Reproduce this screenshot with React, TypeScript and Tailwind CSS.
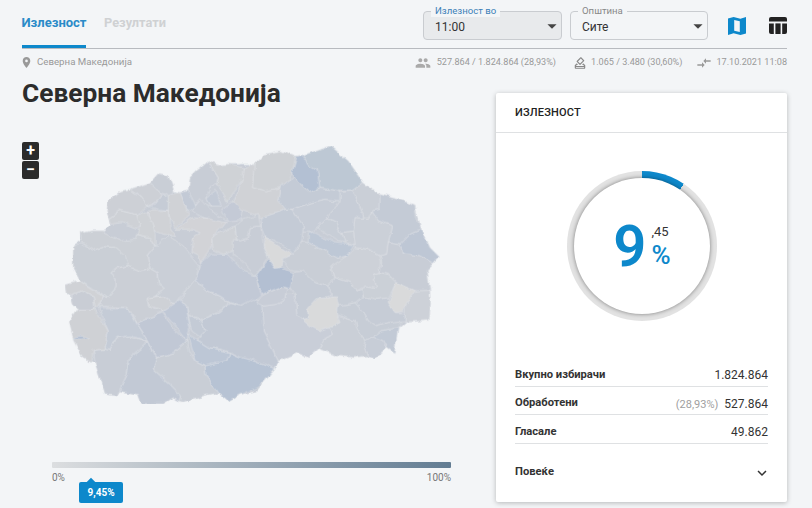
import React from 'react';
import { MdPlace, MdPeople, MdOutlineHowToVote, MdCompareArrows, MdExpandMore, MdArrowDropDown } from 'react-icons/md';

type Region = [string, string];

const outlineLeft =
  '630,100 565,100 535,103 505,92 470,120 450,140 445,180 420,185 400,180 385,135 355,128 330,155 270,175 240,182 205,210 200,240 210,280 195,300 155,300 135,305 120,298 120,330 100,345 100,410 120,450 75,462 78,485 95,500 100,520 115,535 88,575 100,620 130,680 155,695 165,695 195,790 230,795 240,780 295,790 305,818 370,818 400,800 430,812 520,790 535,785 565,810 600,790 630,780';
const outlineRight =
  '0,790 50,780 105,715 115,690 175,665 205,680 240,650 290,675 385,675 405,682 440,650 465,668 478,590 495,575 565,568 572,515 565,480 562,415 598,378 570,350 545,298 525,225 490,210 420,190 370,155 325,90 272,45 190,75 165,78 120,60 75,70 45,100 0,100';

const leftRegions: Region[] = [
  ['330,155 355,128 385,135 403,180 385,195 365,190', '#c9ced6'],
  ['270,175 330,155 365,190 355,210 320,225 300,195', '#cdd0d6'],
  ['205,210 240,182 270,175 300,195 320,225 295,252 240,238 207,262 200,240', '#cdd0d6'],
  ['207,262 240,238 295,252 300,280 290,292 245,275 210,280', '#ced1d6'],
  ['120,298 135,305 155,300 195,300 190,305 240,330 285,325 290,310 330,320 345,345 325,370 330,412 300,420 265,405 250,375 225,350 190,347 160,358 125,335', '#ccd0d6'],
  ['100,345 125,335 160,358 190,347 225,350 255,375 265,405 235,410 213,425 228,440 228,470 205,500 185,490 160,475 120,450 100,410', '#cacfd6'],
  ['213,425 235,410 265,405 300,420 330,412 352,425 355,455 373,473 345,500 325,505 330,525 368,538 345,555 290,575 265,530 175,525 190,495 205,500 228,470 228,440', '#cbcfd6'],
  ['345,345 385,315 430,345 475,400 465,460 420,495 405,522 370,497 345,500 373,473 355,455 352,425 330,412 325,370', '#cacfd7'],
  ['325,505 345,500 370,497 405,522 368,538 330,525', '#ced1d6'],
  ['75,462 120,450 160,478 190,495 175,525 165,535 160,495 125,478 95,495 78,485', '#d0d2d6'],
  ['95,495 125,478 160,495 165,535 115,535 100,520', '#c9cdd5'],
  ['115,535 165,535 205,600 195,655 160,658 155,695 130,680 100,625 88,575', '#cfd1d5'],
  ['175,530 262,530 290,577 325,630 270,615 230,620 210,658 195,655 205,600', '#c5ccd7'],
  ['160,658 195,655 210,658 230,620 270,615 325,633 268,680 262,730 238,780 230,795 195,790 165,695', '#c8cdd6'],
  ['325,633 350,680 340,715 385,755 425,795 420,812 400,800 370,818 305,818 295,790 238,780 262,730 268,680', '#c2c9d5'],
  ['290,575 345,555 368,545 400,595 440,630 400,665 350,680 325,630', '#c1c8d5'],
  ['368,540 420,505 440,530 450,590 440,630 400,580', '#c0c8d6'],
  ['445,550 485,570 495,600 480,618 455,600', '#c4cbd6'],
  ['420,505 465,445 505,480 540,495 570,515 540,545 490,568 445,548 440,530', '#cacfd7'],
  ['480,400 515,368 562,370 610,420 647,435 650,460 665,490 650,505 600,525 570,515 540,495 505,480 465,445', '#c2c9d6'],
  ['490,568 540,545 570,518 600,525 640,505 665,510 667,525 670,600 700,660 715,690 705,712 660,695 600,678 575,665 545,655 510,650 470,625 480,618 495,600 485,570', '#c2c9d5'],
  ['445,610 470,625 510,650 570,665 560,690 495,705 465,690', '#bdc7d6'],
  ['350,680 400,665 440,630 450,665 465,690 495,705 498,735 535,785 520,790 430,812 420,812 425,795 385,755 340,715', '#c9ced6'],
  ['495,705 560,690 570,665 600,678 660,695 705,712 675,750 650,770 600,790 565,810 535,785 498,735', '#b7c3d4'],
  ['505,92 515,110 535,140 530,160 510,165 500,200 515,225 470,215 455,235 445,180 450,140 470,120', '#c8cdd6'],
  ['505,92 535,103 565,100 610,110 605,150 575,185 565,215 545,180 530,160 535,140 515,110', '#cfd2d6'],
  ['500,200 525,180 545,225 515,225', '#c3cad6'],
  ['545,235 580,212 610,235 605,265 565,270 545,245', '#c4cad6'],
  ['455,235 480,205 515,240 560,270 545,280 500,262 480,255', '#c8cdd6'],
  ['420,185 445,180 468,225 455,240 440,235', '#c3cad6'],
  ['385,190 420,185 440,235 450,250 405,290 390,265 385,238', '#d0d2d6'],
  ['320,225 355,235 385,238 385,190 365,195 345,220', '#c6ccd6'],
  ['320,240 385,238 390,290 410,315 385,315 345,300 340,280', '#d0d2d6'],
  ['290,255 320,240 340,280 345,310 345,345 330,320 290,310 300,280', '#cfd2d6'],
  ['405,295 455,260 505,262 555,275 535,300 515,325 515,350 485,395 475,375 455,365 460,320 480,305 455,295', '#d2d3d7'],
  ['530,310 585,285 590,325 580,360 550,370 520,355 515,325', '#cfd2d7'],
];

const rightRegions: Region[] = [
  ['45,100 75,70 120,60 165,78 158,120 145,150 120,170 75,180 40,170', '#ced1d5'],
  ['10,110 45,100 40,170 75,180 120,170 115,205 140,235 65,260 0,235 -20,212 5,150', '#d0d2d6'],
  ['170,80 190,75 205,100 232,115 240,170 210,185 160,140 158,120', '#b3c0d3'],
  ['190,75 272,45 325,90 370,155 335,180 300,180 240,172 232,115 205,100', '#bdc8d4'],
  ['145,150 160,140 210,185 240,172 300,180 300,210 255,205 215,215 155,235 140,235 115,205 120,170', '#c4cbd6'],
  ['155,235 215,215 255,205 300,210 290,225 260,260 230,290 215,300 185,300 190,285', '#c7cdd7'],
  ['300,185 335,180 345,190 372,262 345,260 340,300 305,305 290,275 260,260 290,225 300,210', '#c7cdd7'],
  ['335,180 370,155 420,190 420,235 395,240 385,262 372,262 345,190', '#cacfd7'],
  ['420,190 490,210 525,225 530,265 545,295 510,310 480,342 445,335 458,285 415,270 395,240 420,235', '#c4cbd6'],
  ['545,295 570,350 598,378 580,397 540,375 490,368 480,342 510,310', '#bec7d5'],
  ['345,260 385,262 395,240 415,270 458,285 445,335 440,370 420,375 380,355 345,350 340,300', '#cbd0d8'],
  ['305,305 340,300 345,340 315,335', '#cacfd7'],
  ['260,260 290,275 305,305 315,335 290,330 230,290', '#c8ced7'],
  ['205,305 215,300 280,335 340,342 320,375 290,382 245,355 205,335', '#bec8d6'],
  ['65,260 140,235 155,235 190,285 185,330 160,370 130,340 75,318 62,285', '#c4cbd6'],
  ['-15,285 0,270 55,250 62,285 30,290 25,325 0,330 -10,325', '#c9ced6'],
  ['-20,375 -20,325 0,330 25,325 30,290 62,285 70,345 85,375 47,435 0,385', '#c8cdd6'],
  ['75,318 115,345 155,370 130,385 125,410 105,412 85,375 70,345', '#d9dadb'],
  ['85,385 105,412 125,410 130,412 160,425 155,470 125,465 65,490 55,460 47,435', '#b3bfd2'],
  ['125,385 160,370 185,330 205,335 245,355 290,382 320,375 290,400 275,405 285,440 260,465 225,455 190,420 150,415', '#c9ced6'],
  ['275,405 320,375 345,350 380,355 420,375 425,395 420,425 400,430 410,470 375,465 350,480 330,455 285,440', '#cdd1d8'],
  ['420,375 440,370 445,335 480,342 490,368 540,375 580,397 562,415 570,478 525,480 468,455 445,430 420,425 425,395', '#c8cdd6'],
  ['400,430 420,425 445,430 468,455 445,500 410,505 370,495 365,475 375,465 410,470', '#cbd0d7'],
  ['468,455 525,480 497,520 490,540 465,545 445,515', '#d9dadb'],
  ['525,480 570,478 572,515 568,568 495,572 495,545 497,520', '#cdd1d8'],
  ['345,515 370,495 410,505 445,500 445,515 465,545 495,545 495,572 445,575 405,585 385,570 370,545', '#c6ccd6'],
  ['260,465 285,440 330,455 350,480 365,475 370,495 345,515 295,525 275,490', '#c7cdd6'],
  ['232,502 270,500 290,497 295,525 292,550 300,575 245,600 215,590 185,565 205,560 202,535', '#d9dadb'],
  ['160,425 190,420 225,455 260,465 275,490 270,500 232,502 202,535 205,560 185,565 170,550 165,490 150,470', '#c6ccd6'],
  ['295,525 345,515 370,545 385,570 405,585 445,575 480,570 478,590 420,600 395,618 375,630 350,590 345,570 292,550', '#c7cdd6'],
  ['420,600 478,590 465,668 440,650 430,630 395,618', '#c2cad6'],
  ['375,630 395,618 430,630 440,650 405,682 385,675 372,650', '#c7cdd7'],
  ['292,555 345,570 350,590 375,630 372,650 385,675 340,680 290,675 240,655 255,620 280,610 270,590 300,575', '#cacfd7'],
  ['65,525 110,520 135,505 140,490 165,490 170,550 185,565 215,590 245,600 270,590 280,610 255,620 240,650 205,680 175,665 115,690 100,660 70,600', '#c9ced8'],
  ['50,515 65,495 125,465 140,470 135,505 110,520 70,525', '#c8cdd7'],
];

const MapShape = () => (
  <svg width="420" height="290" viewBox="0 0 1260 870" className="block">
    <defs>
      <filter id="rough" x="0" y="0" width="100%" height="100%">
        <feTurbulence type="fractalNoise" baseFrequency="0.035" numOctaves="3" seed="4" />
        <feDisplacementMap in="SourceGraphic" scale="16" xChannelSelector="R" yChannelSelector="G" />
      </filter>
    </defs>
    <g filter="url(#rough)">
      <polygon points={outlineLeft} fill="#c8cdd6" />
      <polygon points={outlineRight} fill="#c8cdd6" transform="translate(600 0)" />
      <g stroke="#e4e7eb" strokeWidth="1.5" strokeLinejoin="round">
        {leftRegions.map(([points, fill]) => (
          <polygon key={points} points={points} fill={fill} />
        ))}
        <g transform="translate(600 0)">
          {rightRegions.map(([points, fill]) => (
            <polygon key={points} points={points} fill={fill} />
          ))}
        </g>
        <path d="M98 621 Q122 610 146 620 Q122 628 98 621Z" fill="#b2bfd3" />
      </g>
    </g>
  </svg>
);

const FoldedMapIcon = () => (
  <svg width="20" height="20" viewBox="0 0 20 20" fill="#0d88cb">
    <path d="M1 2.600 6.600 1l6.800 1.800L19 1v16.400L13.400 19l-6.800-1.800L1 19ZM7.200 4v10.800l5.600 1.300V5.300Z" fillRule="evenodd" />
  </svg>
);

const TableIcon = () => (
  <svg width="20" height="20" viewBox="0 0 20 20" fill="#222">
    <path d="M3 1h14a2 2 0 0 1 2 2v2.600H1V3a2 2 0 0 1 2-2Z" />
    <path d="M1 7.400h4.800V18H3a2 2 0 0 1-2-2Z" />
    <rect x="7.400" y="7.400" width="5.200" height="10.600" />
    <path d="M14.200 7.400H19V16a2 2 0 0 1-2 2h-2.800Z" />
  </svg>
);

const SelectBox = ({ label, value, active }: { label: string; value: string; active?: boolean }) => (
  <div
    className={`relative flex h-[29px] items-center justify-between rounded border border-[#c9ccd0] pl-[11px] ${
      active ? 'w-[139px] bg-[#e8eaec]' : 'w-[138px]'
    }`}
  >
    <span className="pt-[2px] text-[12px] text-[#333]">{value}</span>
    <MdArrowDropDown className="mr-[-2px] text-[22px] text-[#444]" />
    <span
      className={`absolute -top-[7px] left-[7px] bg-[#f3f5f7] px-[4px] text-[9.600px] leading-[12px] ${
        active ? 'text-[#3b7fb8]' : 'text-[#888]'
      }`}
    >
      {label}
    </span>
  </div>
);

const StatRow = ({ label, value, note }: { label: string; value: string; note?: string }) => (
  <div className="flex h-[28.500px] items-center justify-between border-b border-[#dfe1e3] pt-[7px]">
    <strong className="text-[11.200px] font-bold text-[#333]">{label}</strong>
    <span className="text-[12px] text-[#333]">
      {note && <span className="mr-[6px] text-[11px] text-[#a0a0a0]">{note}</span>}
      {value}
    </span>
  </div>
);

const App = () => {
  return (
    <div className="h-[508px] w-[812px] overflow-hidden bg-[#f3f5f7] pl-[22px] pr-[25px] font-['Roboto',sans-serif]">
      <div className="flex h-[49px] items-start border-b border-[#b7babf]">
        <div className="flex h-[48px] w-[64px] items-center justify-center border-b-[3px] border-[#0d88cb]">
          <strong className="text-[13px] font-bold text-[#2a8bc8]">Излезност</strong>
        </div>
        <div className="ml-[18px] flex h-[46px] items-center">
          <strong className="text-[12.800px] font-bold text-[#cfd1d3]">Резултати</strong>
        </div>
        <div className="ml-auto mt-[11px] flex items-start gap-[8px]">
          <SelectBox label="Излезност во" value="11:00" active />
          <SelectBox label="Општина" value="Сите" />
          <div className="ml-[11px] mt-[5px]">
            <FoldedMapIcon />
          </div>
          <div className="ml-[13px] mr-[-1px] mt-[5px]">
            <TableIcon />
          </div>
        </div>
      </div>

      <div className="flex h-[27px] items-center text-[9.700px] text-[#999]">
        <MdPlace className="ml-[-2px] text-[13px] text-[#999]" />
        <span className="ml-[4px]">Северна Македонија</span>
        <div className="ml-auto flex items-center pt-[1px] text-[9.100px]">
          <MdPeople className="text-[16px] text-[#aaa]" />
          <span className="ml-[6px]">527.864 / 1.824.864 (28,93%)</span>
          <MdOutlineHowToVote className="ml-[17px] text-[14px] text-[#888]" />
          <span className="ml-[4px]">1.065 / 3.480 (30,60%)</span>
          <MdCompareArrows className="ml-[14px] text-[16px] text-[#999]" />
          <span className="ml-[4px]">17.10.2021 11:08</span>
        </div>
      </div>

      <div className="flex items-start justify-between">
        <div className="w-[450px]">
          <h1 className="mt-[1px] text-[26.300px] font-bold leading-[32px] text-[#2c2c2c]">Северна Македонија</h1>
          <div className="relative mt-[22px] ml-[18px]">
            <div className="absolute left-[-18px] top-[11px] flex flex-col gap-[1px]">
              <div className="flex h-[18px] w-[17px] items-center justify-center rounded-[2px] bg-[#2b2b2b] text-[16px] font-bold leading-none text-white">+</div>
              <div className="flex h-[18px] w-[17px] items-center justify-center rounded-[2px] bg-[#2b2b2b] text-[16px] font-bold leading-none text-white">−</div>
            </div>
            <MapShape />
          </div>
          <div className="ml-[30px] mt-[41px] w-[399px]">
            <div className="h-[6px] rounded-[1px] bg-gradient-to-r from-[#dcdee0] to-[#627c92]" />
            <div className="mt-[4px] flex justify-between text-[10px] leading-[12px] text-[#777]">
              <span>0%</span>
              <span>100%</span>
            </div>
            <div className="relative ml-[27px] mt-[-2px] flex h-[21px] w-[44px] items-center justify-center rounded-[2px] bg-[#0d88cb] text-[10px] font-bold text-white">
              <div className="absolute left-[9px] top-[-3px] h-[6px] w-[6px] rotate-45 bg-[#0d88cb]" />
              9,45%
            </div>
          </div>
        </div>

        <div className="mt-[17px] h-[409px] w-[291px] rounded-[2px] bg-white shadow-[0_1px_5px_rgba(0,0,0,0.25)]">
          <div className="flex h-[40px] items-center border-b border-[#dfe1e3] px-[19px] pt-[1px]">
            <strong className="text-[11px] font-medium tracking-[0.2px] text-[#222]">ИЗЛЕЗНОСТ</strong>
          </div>
          <div className="flex justify-center pt-[38px]">
            <div className="relative flex h-[150px] w-[150px] items-center justify-center rounded-full bg-[conic-gradient(#0d88cb_0deg_34deg,#e2e2e2_34deg)]">
              <div className="flex h-[136px] w-[136px] items-center justify-center rounded-full bg-white pl-[1px] shadow-[0_0_4px_rgba(0,0,0,0.45)]">
                <span className="text-[58px] font-semibold leading-none text-[#0d88cb]">9</span>
                <div className="ml-[5px] flex flex-col items-start gap-[4px]">
                  <span className="text-[13px] leading-[14px] text-[#333]">,45</span>
                  <span className="text-[26px] font-medium leading-[24px] text-[#0d88cb]">%</span>
                </div>
              </div>
            </div>
          </div>
          <div className="mt-[37px] px-[19px]">
            <StatRow label="Вкупно избирачи" value="1.824.864" />
            <StatRow label="Обработени" value="527.864" note="(28,93%)" />
            <StatRow label="Гласале" value="49.862" />
            <div className="mt-[15px] flex h-[28px] items-center justify-between">
              <strong className="text-[11.200px] font-bold text-[#333]">Повеќе</strong>
              <MdExpandMore className="mr-[-3px] text-[18px] text-[#333]" />
            </div>
          </div>
        </div>
      </div>
    </div>
  );
};

export default App;
